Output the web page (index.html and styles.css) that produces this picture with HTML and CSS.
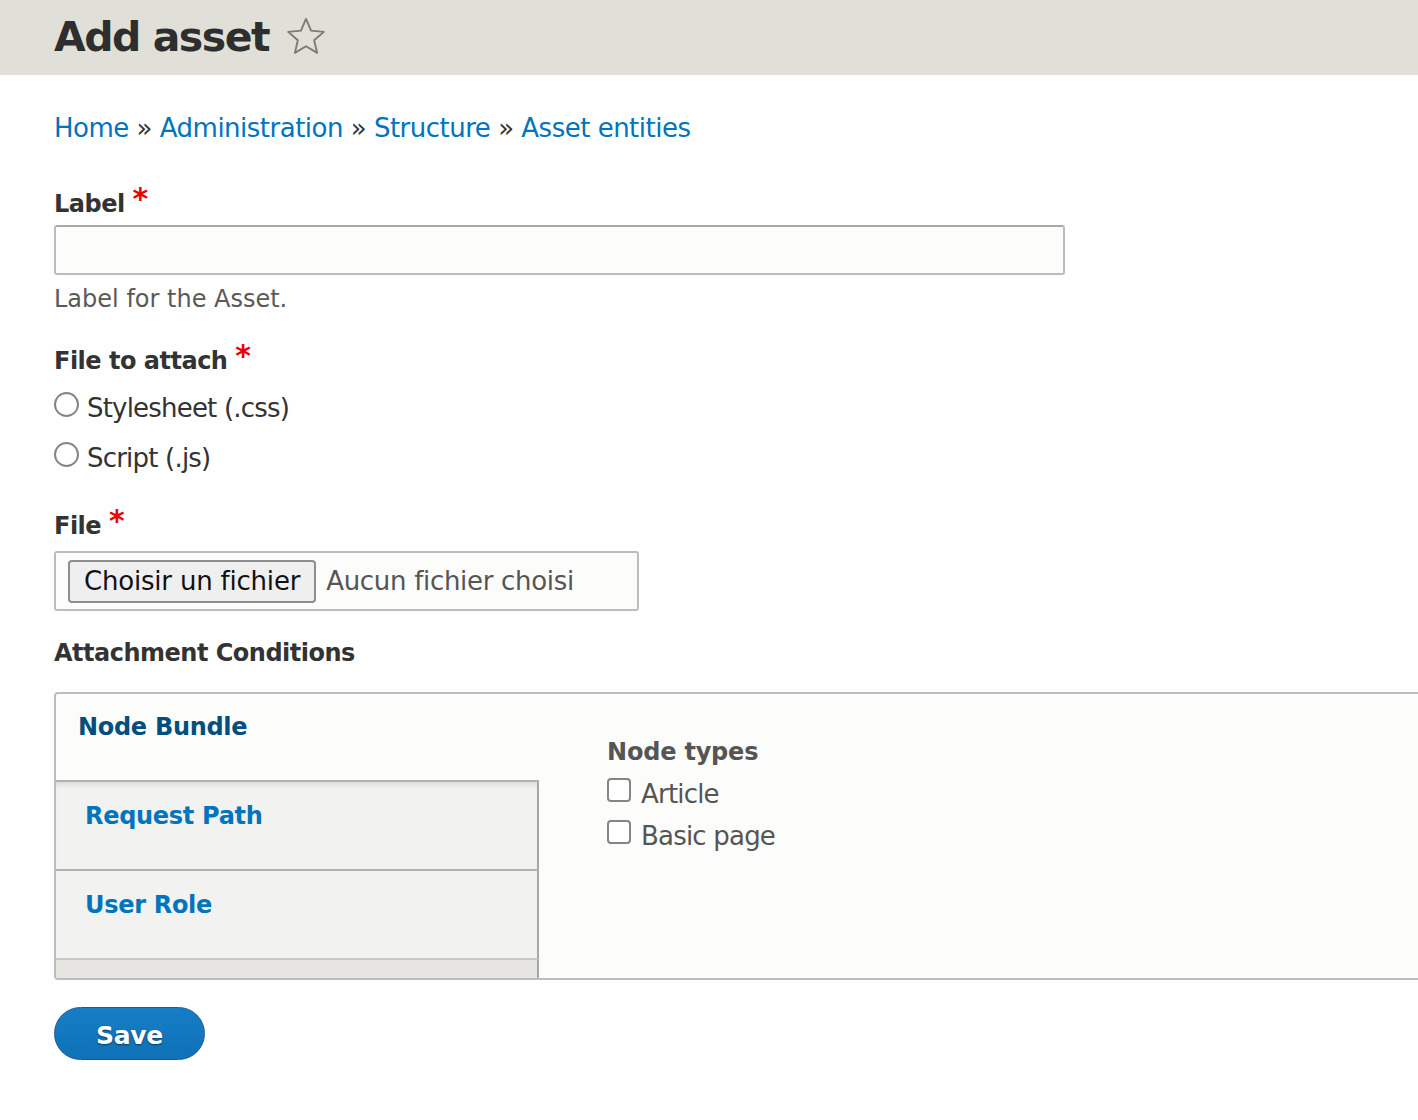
FILE: index.html
```html
<!DOCTYPE html>
<html lang="en">
<head>
<meta charset="utf-8">
<title>Add asset</title>
<link rel="stylesheet" href="styles.css">
</head>
<body>
<header class="page-header">
  <h1 class="page-title"><span class="title-text">Add asset</span>
    <svg class="star" viewBox="0 0 40 40" width="44" height="44" aria-hidden="true">
      <path d="M20 3.5 L24.6 14.2 L36.2 15.3 L27.4 23 L30.1 34.4 L20 28.4 L9.9 34.4 L12.6 23 L3.8 15.3 L15.4 14.2 Z" fill="none" stroke="#7e7c68" stroke-width="1.7" stroke-linejoin="round"/>
    </svg>
  </h1>
</header>
<main class="content">
  <nav class="breadcrumb">
    <a href="#">Home</a> » <a href="#">Administration</a> » <a href="#">Structure</a> » <a href="#">Asset entities</a>
  </nav>
  <form class="asset-form">
    <div class="form-item item-label">
      <label class="form-label">Label <span class="req">*</span></label>
      <input class="form-text" type="text">
      <div class="description">Label for the Asset.</div>
    </div>
    <div class="form-item item-type">
      <div class="form-label">File to attach <span class="req">*</span></div>
      <label class="radio-row"><input type="radio" name="t" class="radio"><span>Stylesheet (.css)</span></label>
      <label class="radio-row"><input type="radio" name="t" class="radio"><span>Script (.js)</span></label>
    </div>
    <div class="form-item item-file">
      <div class="form-label">File <span class="req">*</span></div>
      <div class="file-box"><span class="file-btn">Choisir un fichier</span><span class="file-none">Aucun fichier choisi</span></div>
    </div>
    <div class="section-title">Attachment Conditions</div>
    <div class="vtabs">
      <ul class="vtabs-menu">
        <li class="vtab active"><a href="#">Node Bundle</a></li>
        <li class="vtab"><a href="#">Request Path</a></li>
        <li class="vtab"><a href="#">User Role</a></li>
        <li class="vtab-end"></li>
      </ul>
      <div class="vtabs-pane">
        <div class="pane-title">Node types</div>
        <label class="check-row"><input type="checkbox" class="check"><span>Article</span></label>
        <label class="check-row"><input type="checkbox" class="check"><span>Basic page</span></label>
      </div>
    </div>
    <div class="actions"><button type="button" class="btn-save">Save</button></div>
  </form>
</main>
</body>
</html>
```
FILE: styles.css
```css
html { overflow-x: hidden; }
body {
  margin: 0;
  font-family: "DejaVu Sans", "Liberation Sans", sans-serif;
  color: #333;
  background: #fff;
}
.page-header {
  background: #e0e0d8;
  height: 75px;
  padding-left: 54px;
}
.page-title {
  margin: 0;
  font-size: 41px;
  line-height: 75px;
  font-weight: bold;
  color: #2e2e2e;
  display: flex;
  align-items: center;
  gap: 15px;
}
.title-text { letter-spacing: -1.5px; }
.star { display: block; margin-top: -2px; }
.content { padding-left: 54px; }
.breadcrumb {
  margin-top: 35px;
  font-size: 26px;
  line-height: 36px;
  letter-spacing: -0.5px;
  color: #333;
}
.breadcrumb a { color: #0074bd; text-decoration: none; }
.asset-form { display: flex; flex-direction: column; align-items: flex-start; }
.form-item { display: flex; flex-direction: column; align-items: flex-start; }
.form-label, .section-title {
  font-size: 24px;
  line-height: 32px;
  font-weight: bold;
  letter-spacing: -0.5px;
  color: #333;
}
.req {
  color: #e00;
  font-size: 30px;
  line-height: 0;
  vertical-align: 3px;
  letter-spacing: 0;
}
.item-label { margin-top: 42px; }
.form-text {
  margin: 5px 0 0;
  box-sizing: border-box;
  width: 1011px;
  height: 50px;
  border: 2px solid #bcbcbc;
  border-top-color: #a8a8a8;
  border-radius: 3px;
  background: #fcfcfa;
  font: inherit;
}
.description {
  margin-top: 9px;
  font-size: 24px;
  line-height: 30px;
  color: #595959;
}
.item-type { margin-top: 31px; }
.radio-row, .check-row {
  display: flex;
  align-items: flex-start;
  font-size: 26px;
  line-height: 32px;
  letter-spacing: -0.8px;
}
.item-type .form-label { margin-bottom: 15px; }
.radio-row { height: 50px; color: #333; }
.radio, .check {
  appearance: none;
  -webkit-appearance: none;
  margin: 0 8px 0 0;
  width: 25px;
  height: 25px;
  border: 2px solid #858585;
  background: #fff;
  box-sizing: border-box;
  flex: none;
}
.radio { border-radius: 50%; }
.check { width: 24px; height: 24px; border-radius: 4px; margin-right: 10px; }
.item-file { margin-top: 18px; }
.file-box {
  margin-top: 9px;
  box-sizing: border-box;
  width: 585px;
  height: 60px;
  border: 2px solid #bcbcbc;
  border-radius: 3px;
  background: #fcfcfa;
  display: flex;
  align-items: center;
  padding-left: 12px;
  gap: 10px;
  font-size: 26px;
}
.file-btn {
  box-sizing: border-box;
  height: 43px;
  padding: 0 14px;
  border: 2px solid #8d8d8d;
  border-radius: 4px;
  background: #efefef;
  color: #111;
  line-height: 39px;
  letter-spacing: -0.2px;
}
.file-none { color: #555; letter-spacing: -0.3px; }
.section-title { margin-top: 26px; }
.vtabs {
  margin-top: 23px;
  width: 1420px;
  display: flex;
  border: 2px solid #bdbdbd;
  border-right: 0;
  border-radius: 4px 0 0 4px;
  background: #fcfcfa;
  overflow: hidden;
}
.vtabs-menu {
  list-style: none;
  margin: 0;
  padding: 0;
  width: 483px;
  flex: none;
  display: flex;
  flex-direction: column;
}
.vtab {
  background: #f2f2f0;
  border-right: 2px solid #a8a8a3;
  border-top: 2px solid #b3b3ae;
  padding: 18px 0 0 29px;
  height: 69px;
  font-size: 24px;
  line-height: 32px;
  font-weight: bold;
  letter-spacing: -0.3px;
}
.vtab.active {
  background: #fcfcfa;
  border-right: 0;
  border-top: 0;
  padding: 17px 2px 0 22px;
  height: 69px;
}
.vtab.active + .vtab {
  box-shadow: inset 0 6px 6px -4px rgba(0,0,0,0.12);
}
.vtab a { color: #0074bd; text-decoration: none; }
.vtab.active a { color: #004f80; }
.vtab-end {
  height: 18px;
  background: #e6e5e1;
  border-right: 2px solid #a8a8a3;
  border-top: 2px solid #c8c8c4;
}
.vtabs-pane {
  flex: 1;
  padding: 42px 0 30px 68px;
}
.pane-title {
  font-size: 24px;
  line-height: 32px;
  font-weight: bold;
  letter-spacing: -0.2px;
  color: #555;
  margin-bottom: 10px;
}
.check-row { color: #555; margin-bottom: 10px; }
.actions { margin-top: 27px; }
.btn-save {
  box-sizing: border-box;
  width: 151px;
  height: 53px;
  border: 1px solid #1e5c90;
  border-radius: 27px;
  background: linear-gradient(#167ec6, #0f71b7);
  color: #fff;
  font-family: inherit;
  font-size: 25px;
  font-weight: bold;
  letter-spacing: -0.3px;
  text-shadow: 0 1px 2px rgba(0,0,0,0.5);
  padding: 3px 0 0;
}
```
